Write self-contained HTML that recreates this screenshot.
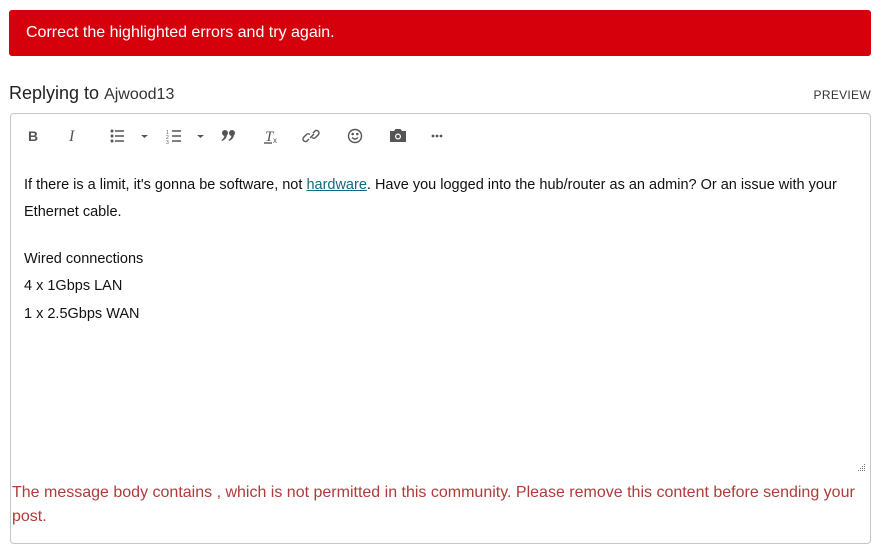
<!DOCTYPE html>
<html><head><style>
body{margin:0;width:884px;height:558px;background:#fff;font-family:"Liberation Sans",sans-serif;position:relative;overflow:hidden}
.banner{position:absolute;left:9px;top:10px;width:862px;height:46px;background:#d6000c;border-radius:3px;color:#fff;font-size:16px;line-height:46px;box-sizing:border-box;padding-left:17px}
.rep{position:absolute;left:9px;top:83px;font-size:18px;color:#222}
.rep span{font-size:16px;color:#333}
.prev{position:absolute;right:13px;top:88px;font-size:12px;color:#333;letter-spacing:.3px}
.box{position:absolute;left:10px;top:113px;width:861px;height:431px;box-sizing:border-box;border:1px solid #c6c6c6;border-radius:4px}
.txt{position:absolute;left:24px;font-size:14.5px;color:#111;line-height:27.3px;width:840px}
.txt a{color:#0e6b7a;text-decoration:underline}
.err{position:absolute;left:12px;top:481px;width:860px;font-size:16px;line-height:24px;color:#b13a3a}
</style></head><body>
<div class="banner">Correct the highlighted errors and try again.</div>
<div class="rep">Replying to <span>Ajwood13</span></div>
<div class="prev">PREVIEW</div>
<div class="box"></div>
<svg style="position:absolute;left:0;top:120px" width="460" height="32" fill="none" stroke="#555" stroke-width="1.4">
<text x="28" y="21" font-family="Liberation Sans" font-weight="bold" font-size="14" fill="#555" stroke="none">B</text>
<text x="69" y="21" font-family="Liberation Serif" font-style="italic" font-size="16" fill="#555" stroke="none">I</text>
<g><circle cx="112" cy="11" r=".8" fill="#555"/><circle cx="112" cy="16" r=".8" fill="#555"/><circle cx="112" cy="21" r=".8" fill="#555"/><path d="M115 11h9M115 16h9M115 21h9"/></g>
<path d="M141 15h7l-3.5 3z" fill="#555" stroke="none"/>
<g><path d="M172 11h9M172 16h9M172 21h9"/><text x="166" y="14" font-size="5" fill="#555" stroke="none">1</text><text x="166" y="19" font-size="5" fill="#555" stroke="none">2</text><text x="166" y="24" font-size="5" fill="#555" stroke="none">3</text></g>
<path d="M197 15h7l-3.5 3z" fill="#555" stroke="none"/>
<g fill="#555" stroke="none"><circle cx="225" cy="13" r="3"/><path d="M226 12l1 2q0 5-5 7l-.5-1q3-2 3-5z"/><circle cx="232" cy="13" r="3"/><path d="M233 12l1 2q0 5-5 7l-.5-1q3-2 3-5z"/></g>
<text x="265" y="21" font-family="Liberation Serif" font-style="italic" font-size="15" fill="#555" stroke="none">T</text><text x="273" y="23" font-size="8" fill="#555" stroke="none">x</text><path d="M264 23h8"/>
<path d="M309 19l-2 2a2.5 2.5 0 0 1-3.5-3.5l3-3a2.5 2.5 0 0 1 3.5 0M313 13l2-2a2.5 2.5 0 0 1 3.5 3.5l-3 3a2.5 2.5 0 0 1-3.5 0M310 18l4-4"/>
<circle cx="355" cy="16" r="6.5"/><circle cx="352.7" cy="14" r=".6" fill="#555"/><circle cx="357.3" cy="14" r=".6" fill="#555"/><path d="M352 17.5q3 3 6 0"/>
<path d="M390 11h4l1.5-2h5l1.5 2h4v11h-16z" fill="#555" stroke="none"/><circle cx="398" cy="16.5" r="3" fill="#fff" stroke="none"/><circle cx="398" cy="16.5" r="1.8" fill="#555" stroke="none"/>
<circle cx="433" cy="16" r="1.4" fill="#555" stroke="none"/><circle cx="437" cy="16" r="1.4" fill="#555" stroke="none"/><circle cx="441" cy="16" r="1.4" fill="#555" stroke="none"/>
</svg>
<div class="txt" style="top:172px">If there is a limit, it's gonna be software, not <a>hardware</a>. Have you logged into the hub/router as an admin? Or an issue with your Ethernet cable.</div>
<div class="txt" style="top:246px">Wired connections<br>4 x 1Gbps LAN<br>1 x 2.5Gbps WAN</div>
<svg style="position:absolute;left:857px;top:463px" width="10" height="10" fill="#777"><rect x="7" y="1" width="1" height="1"/><rect x="5" y="3" width="1" height="1"/><rect x="7" y="3" width="1" height="1"/><rect x="3" y="5" width="1" height="1"/><rect x="5" y="5" width="1" height="1"/><rect x="7" y="5" width="1" height="1"/><rect x="1" y="7" width="1" height="1"/><rect x="3" y="7" width="1" height="1"/><rect x="5" y="7" width="1" height="1"/><rect x="7" y="7" width="1" height="1"/></svg>
<div class="err">The message body contains , which is not permitted in this community. Please remove this content before sending your post.</div>
</body></html>
